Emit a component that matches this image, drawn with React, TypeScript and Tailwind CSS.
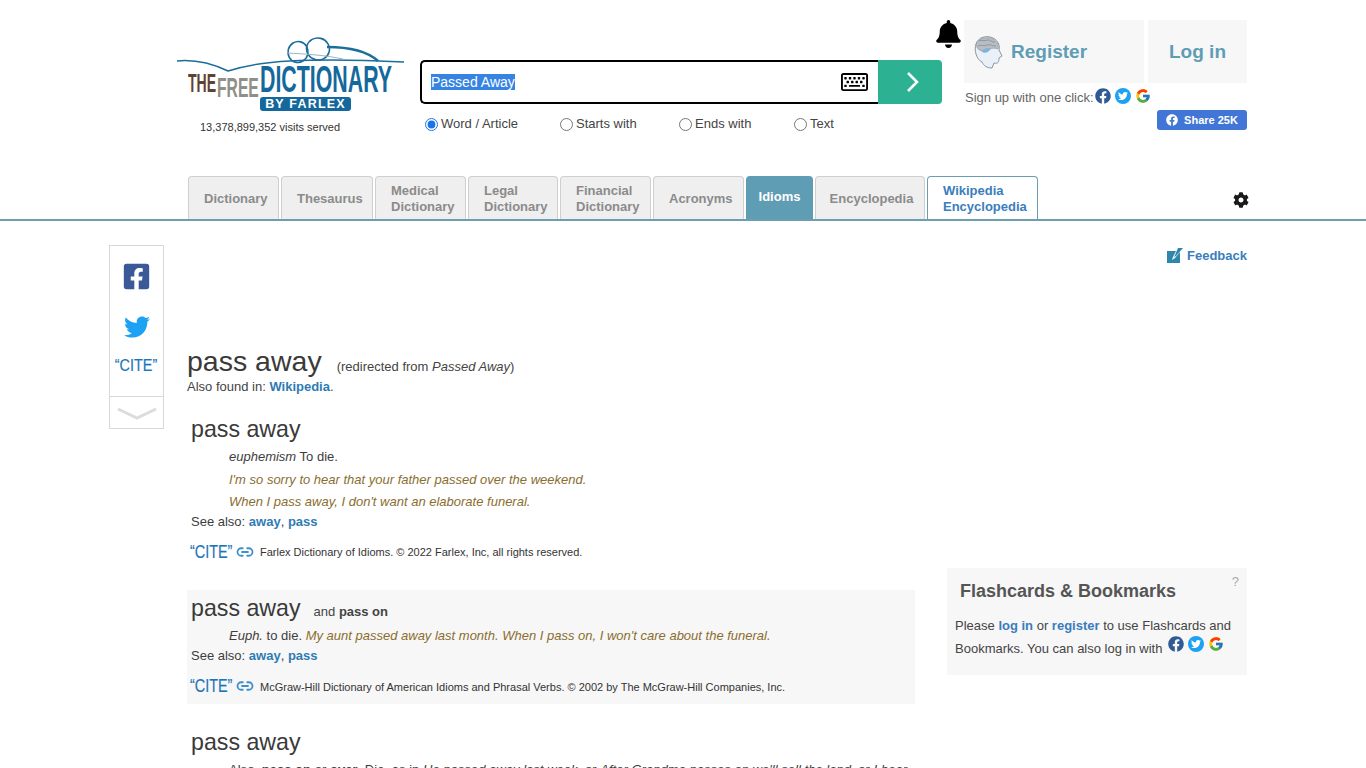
import { Link2 } from "lucide-react";
import { FaBell, FaCog, FaFacebook, FaFacebookSquare, FaTwitter, FaRegKeyboard } from "react-icons/fa";
import { FcGoogle } from "react-icons/fc";

const tabs = [
  { label: ["Dictionary"], w: "w-[91px]" },
  { label: ["Thesaurus"], w: "w-[92px]" },
  { label: ["Medical", "Dictionary"], w: "w-[91px]" },
  { label: ["Legal", "Dictionary"], w: "w-[90px]" },
  { label: ["Financial", "Dictionary"], w: "w-[91px]" },
  { label: ["Acronyms"], w: "w-[91px]" },
];

const radios = [
  { label: "Word / Article", w: "w-[135px]", on: true },
  { label: "Starts with", w: "w-[119px]", on: false },
  { label: "Ends with", w: "w-[115px]", on: false },
  { label: "Text", w: "w-[60px]", on: false },
];

function Logo() {
  return (
    <div className="relative h-[76px] w-[230px]">
      {/* swoosh + glasses */}
      <svg className="absolute left-0 top-0" width="232" height="40" viewBox="0 0 232 40" fill="none">
        <path d="M2 24 C 22 22, 38 27, 53 34 C 75 27, 95 25, 115 24 C 150 22, 190 23, 229 25" stroke="#1b6d9c" strokeWidth="1.5" />
        <path d="M152 10 C 175 10, 192 14, 203 24" stroke="#1b6d9c" strokeWidth="2.4" />
        <ellipse cx="123" cy="15" rx="10" ry="10.5" stroke="#1b6d9c" strokeWidth="1.6" transform="rotate(15 123 15)" />
        <ellipse cx="143" cy="12" rx="11.5" ry="11" stroke="#1b6d9c" strokeWidth="1.6" transform="rotate(15 143 12)" />
        <path d="M112 16 C 130 17, 150 18, 168 22" stroke="#9fb4c4" strokeWidth="1" />
      </svg>
      <span className="absolute left-[13px] top-[33px] origin-top-left scale-x-[0.53] whitespace-nowrap text-[26.5px] font-bold leading-none text-[#5f4332]">THE</span>
      <span className="absolute left-[42px] top-[37px] origin-top-left scale-x-[0.56] whitespace-nowrap text-[28px] font-bold leading-none text-[#8e9088]">FREE</span>
      <span className="absolute left-[85px] top-[25px] origin-top-left scale-x-[0.593] whitespace-nowrap text-[36px] font-bold leading-none text-[#15689b]">DICTIONARY</span>
      <div className="absolute left-[85px] top-[60px] flex h-[14px] w-[91px] items-center justify-center rounded-[3px] bg-[#15689b] text-[12.5px] font-bold leading-none tracking-[1.2px] text-white">
        BY FARLEX
      </div>
    </div>
  );
}

function BrainHead() {
  return (
    <svg width="30" height="34" viewBox="0 0 30 34" className="shrink-0">
      <path d="M3 9 C5 2 14 0 20 3 C26 6 27 12 26 15 L29 21 L26 23 C26 27 25 29 21 28 L19 33 C14 33 11 31 9 27 C3 24 1 15 3 9Z" fill="#eaf0f8" stroke="#8b95a3" />
      <path d="M3 10 C5 3 14 1 20 4 C25 7 26 11 25 14 C20 12 17 14 12 15 C8 16 5 16 3 10Z" fill="#b8bec4" stroke="#8c9299" strokeWidth="0.6" />
      <path d="M6 6 C9 4 11 7 14 5 C17 4 19 8 22 7 M5 11 C8 9 11 12 14 10 C17 9 19 11 23 11" fill="none" stroke="#7f858c" strokeWidth="0.7" />
      <path d="M8 16 C11 19 15 18 18 14 L14 13 Z" fill="#7fb2d8" />
    </svg>
  );
}

function SocialIcons() {
  return (
    <span className="inline-flex items-center gap-[4px]">
      <FaFacebook className="h-[16px] w-[16px] text-[#2f5a95]" />
      <span className="inline-flex h-[16px] w-[16px] items-center justify-center rounded-full bg-[#1da1f2]">
        <FaTwitter className="h-[10px] w-[10px] text-white" />
      </span>
      <FcGoogle className="h-[16px] w-[16px]" />
    </span>
  );
}

function Cite({ source }: { source: string }) {
  return (
    <div className="flex items-center">
      <span className="w-[46px] origin-left -translate-y-[1px] scale-x-[0.8] whitespace-nowrap text-[18px] leading-none text-[#1c75b9] [-webkit-text-stroke:0.2px_#1c75b9]">“CITE”</span>
      <Link2 className="h-[18px] w-[18px] -translate-y-[1px] text-[#3f8fc8]" strokeWidth={2.4} />
      <span className="ml-[6px] text-[11px] text-[#333]">{source}</span>
    </div>
  );
}

function SeeAlso() {
  return (
    <div className="text-[13px] leading-[15px] text-[#3d3d3d]">
      See also: <a className="font-bold text-[#2f7bb4]">away</a>, <a className="font-bold text-[#2f7bb4]">pass</a>
    </div>
  );
}

export default function App() {
  return (
    <div className="h-screen overflow-hidden bg-white font-['Liberation_Sans',Arial,sans-serif] text-[#333]">
      {/* header */}
      <header className="h-[221px] border-b-2 border-[#6d9db0]">
        <div className="relative flex h-[176px]">
          <div className="ml-[175px] w-[245px] shrink-0 pt-[37px]">
            <Logo />
            <div className="ml-[25px] mt-[8px] text-[11px] leading-[12px] text-[#333]">13,378,899,352 visits served</div>
          </div>

          <div className="w-[522px] shrink-0 pt-[60px]">
            <div className="flex h-[44px]">
              <div className="flex h-[44px] w-[458px] items-center rounded-l-[5px] border-2 border-r-0 border-black pl-[9px] pr-[10px]">
                <span className="bg-[#3584e4] text-[14px] leading-[16px] text-white">Passed Away</span>
                <FaRegKeyboard className="ml-auto h-[26px] w-[27px] text-black" />
              </div>
              <button className="flex h-[44px] w-[64px] items-center justify-center rounded-r-[4px] bg-[#2cb193] pl-[5px]">
                <svg width="14" height="22" viewBox="0 0 14 22" fill="none">
                  <path d="M2 2 L11 11 L2 20" stroke="#fff" strokeWidth="2.6" />
                </svg>
              </button>
            </div>
            <div className="ml-[5px] mt-[12px] flex text-[13px] leading-[16px] text-[#444]">
              {radios.map((r) => (
                <label key={r.label} className={`flex items-center gap-[3px] ${r.w}`}>
                  <input type="radio" name="mode" defaultChecked={r.on} className="h-[13px] w-[13px] accent-[#1a73e8]" />
                  {r.label}
                </label>
              ))}
            </div>
          </div>

          <div className="ml-[22px] w-[283px] shrink-0 pt-[20px]">
            <div className="flex h-[63px] gap-[4px]">
              <div className="flex w-[180px] items-center gap-[8px] bg-[#f7f7f8] pl-[9px] text-[19px] font-bold text-[#5f9db5]">
                <BrainHead />
                <span className="mt-[1px]">Register</span>
              </div>
              <div className="flex w-[99px] items-center justify-center bg-[#f7f7f8] pt-[1px] text-[19px] font-bold text-[#5f9db5]">Log in</div>
            </div>
            <div className="mt-[6px] flex h-[17px] items-center pl-[1px] text-[13px] leading-[17px] text-[#666]">
              Sign up with one click:
              <span className="ml-[1px] mt-[1px]"><SocialIcons /></span>
            </div>
            <div className="mt-[4px] flex justify-end">
              <div className="flex h-[20px] w-[90px] items-center justify-center gap-[6px] rounded-[3px] bg-[#4176d6] text-[11px] font-bold text-white">
                <FaFacebook className="h-[12px] w-[12px]" />
                Share 25K
              </div>
            </div>
          </div>

          <FaBell className="absolute left-[936px] top-[20px] h-[28px] w-[25px] text-black" />
        </div>

        {/* tabs */}
        <nav className="relative flex h-[43px] gap-[2px] pl-[188px]">
          {tabs.map((t) => (
            <div
              key={t.label[0]}
              className={`${t.w} flex flex-col justify-center rounded-t-[4px] border border-b-0 border-[#cfcfcf] bg-[#efefef] pl-[15px] pt-[1px] text-[13px] font-bold leading-[16px] text-[#8b8b8b]`}
            >
              {t.label.map((line) => (
                <span key={line} className="whitespace-nowrap">{line}</span>
              ))}
            </div>
          ))}
          <div className="flex w-[67px] items-center justify-center rounded-t-[4px] bg-[#5f9db5] pb-[2px] text-[13px] font-bold text-white">Idioms</div>
          <div className="flex w-[110px] items-center justify-center rounded-t-[4px] border border-b-0 border-[#cfcfcf] bg-[#efefef] pl-[3px] pt-[1px] text-[13px] font-bold text-[#8b8b8b]">Encyclopedia</div>
          <div className="flex w-[111px] flex-col justify-center rounded-t-[4px] border border-b-0 border-[#6d9db0] bg-white pl-[15px] pt-[1px] text-[13px] font-bold leading-[16px] text-[#3a7dbd]">
            <span>Wikipedia</span>
            <span>Encyclopedia</span>
          </div>
          <FaCog className="absolute left-[1233px] top-[16px] h-[16px] w-[16px] text-[#1a1a1a]" />
        </nav>
      </header>

      {/* body */}
      <div className="flex pl-[109px]">
        <aside className="mt-[24px] h-[184px] w-[55px] shrink-0 border border-[#d8d8d8]">
          <div className="flex h-[151px] flex-col items-center border-b border-[#d8d8d8] pt-[16px]">
            <FaFacebookSquare className="h-[29px] w-[29px] text-[#3b5998]" />
            <FaTwitter className="mt-[23px] h-[26px] w-[26px] text-[#1da1f2]" />
            <span className="mt-[17px] origin-center scale-x-[0.85] text-[17px] leading-[18px] text-[#1c75b9] [-webkit-text-stroke:0.2px_#1c75b9]">“CITE”</span>
          </div>
          <div className="flex justify-center pt-[10px]">
            <svg width="42" height="16" viewBox="0 0 42 16" fill="none">
              <path d="M2 2 L21 11 L40 2" stroke="#dcdcdc" strokeWidth="3" />
            </svg>
          </div>
        </aside>

        <main className="ml-[23px] h-[600px] w-[728px] shrink-0">
          <div className="mt-[123px] flex items-baseline">
            <h1 className="text-[28.5px] leading-[34px] text-[#3a3a3a]">pass away</h1>
            <span className="ml-[15px] text-[13px] text-[#444]">(redirected from <i>Passed Away</i>)</span>
          </div>
          <div className="mt-[1px] text-[13px] leading-[16px] text-[#444]">
            Also found in: <a className="font-bold text-[#2f7bb4]">Wikipedia</a>.
          </div>

          <section className="mt-[21px] pl-[4px]">
            <h2 className="text-[23.2px] leading-[26px] text-[#3a3a3a]">pass away</h2>
            <div className="ml-[38px] mt-[4px] text-[13px] leading-[22.5px]">
              <div className="text-[#3d3d3d]"><i>euphemism</i> To die.</div>
              <div className="italic text-[#8a6d2f]">I'm so sorry to hear that your father passed over the weekend.</div>
              <div className="italic text-[#8a6d2f]">When I pass away, I don't want an elaborate funeral.</div>
            </div>
            <SeeAlso />
          </section>
          <div className="mt-[15px] pl-[3px]">
            <Cite source="Farlex Dictionary of Idioms. © 2022 Farlex, Inc, all rights reserved." />
          </div>

          <section className="mt-[28px] h-[114px] bg-[#f7f7f7] pl-[4px] pt-[5px]">
            <div className="flex items-baseline">
              <h2 className="text-[23.2px] leading-[26px] text-[#3a3a3a]">pass away</h2>
              <span className="ml-[13px] text-[13px] text-[#444]">and <b>pass on</b></span>
            </div>
            <div className="ml-[38px] mt-[5px] text-[13px] leading-[20px] text-[#3d3d3d]">
              <i>Euph.</i> to die. <i className="text-[#8a6d2f]">My aunt passed away last month. When I pass on, I won't care about the funeral.</i>
            </div>
            <div className="mt-[2px]"><SeeAlso /></div>
            <div className="-ml-[1px] mt-[15px]">
              <Cite source="McGraw-Hill Dictionary of American Idioms and Phrasal Verbs. © 2002 by The McGraw-Hill Companies, Inc." />
            </div>
          </section>

          <section className="mt-[25px] pl-[4px]">
            <h2 className="text-[23.2px] leading-[26px] text-[#3a3a3a]">pass away</h2>
            <div className="ml-[38px] mt-[5px] whitespace-nowrap text-[13px] leading-[20px] tracking-[0.03px] text-[#3d3d3d]">
              Also, <b>pass on</b> or <b>over</b>. Die, as in <i>He passed away last week,</i> or <i>After Grandma passes on we'll sell the land,</i> or <i>I hear</i>
            </div>
          </section>
        </main>

        <aside className="ml-[32px] w-[300px] shrink-0">
          <div className="mt-[27px] flex items-center justify-end gap-[4px] text-[13px] font-bold leading-[16px] text-[#3a7dbd]">
            <svg width="16" height="16" viewBox="0 0 16 16" fill="#2f86ad">
              <path d="M0 3 H9 L6 9 L5 12 L8 10 L13 4 V15 H0Z" />
              <path d="M11 0 L16 0 L9 8 L7 9 L8 7Z" />
            </svg>
            Feedback
          </div>
          <div className="relative mt-[304px] h-[107px] bg-[#f7f7f7] pl-[8px] pt-[12px]">
            <span className="absolute right-[8px] top-[4px] text-[13px] text-[#aaa]">?</span>
            <h3 className="pl-[5px] text-[18px] font-bold leading-[22px] text-[#555]">Flashcards &amp; Bookmarks</h3>
            <p className="mt-[12px] text-[13px] leading-[23px] text-[#444]">
              Please <a className="font-bold text-[#3a7dbd]">log in</a> or <a className="font-bold text-[#3a7dbd]">register</a> to use Flashcards and<br />
              Bookmarks. You can also log in with <span className="relative top-[-2px] ml-[2px] inline-block align-middle"><SocialIcons /></span>
            </p>
          </div>
        </aside>
      </div>
    </div>
  );
}
